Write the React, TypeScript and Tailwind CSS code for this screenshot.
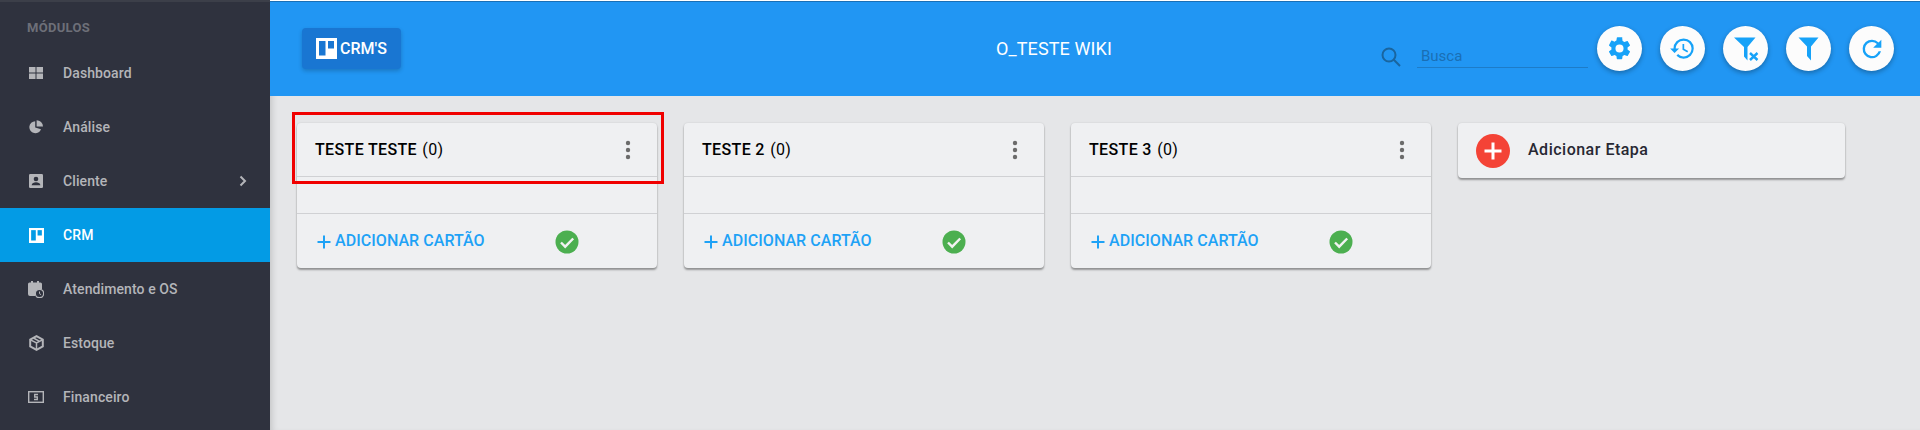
import React from "react";

function Card({ title }: { title: string }) {
  return (
    <div className="w-[360px] h-[145px] shrink-0 rounded bg-[#eff0f2] shadow-[0_2px_2px_rgba(0,0,0,0.35),0_0_2px_rgba(0,0,0,0.12)] flex flex-col">
      <div className="h-[54px] shrink-0 flex items-center justify-between pl-[18px] pr-[26px] border-b border-[#d0d1d4]">
        <span className="text-[16px] font-medium text-black tracking-[0.35px]">{title} <span className="font-normal ml-[1px]">(0)</span></span>
        <svg width="6" height="20" viewBox="0 0 6 20" className="fill-[#6b6b6b]">
          <circle cx="3" cy="3" r="2.2" />
          <circle cx="3" cy="10" r="2.2" />
          <circle cx="3" cy="17" r="2.2" />
        </svg>
      </div>
      <div className="h-[37px] shrink-0 border-b border-[#d0d1d4]" />
      <div className="flex-1 flex items-center pl-[20px] pb-[1px]">
        <svg width="14" height="14" viewBox="0 0 14 14" className="stroke-[#1ea2f6] mr-[4px] mt-[2px]" fill="none" strokeWidth="2">
          <path d="M7 0.5V13.5M0.5 7H13.5" />
        </svg>
        <span className="text-[16px] font-medium text-[#1ea2f6] leading-none tracking-[0.05px]">ADICIONAR CARTÃO</span>
        <svg width="24" height="24" viewBox="0 0 24 24" className="ml-[70px] mt-[2px]">
          <circle cx="12" cy="12" r="11.5" fill="#4caf50" />
          <path d="M6 12.5l4.2 4.2L18.2 8.5" fill="none" stroke="#f2f2f2" strokeWidth="2.4" />
        </svg>
      </div>
    </div>
  );
}

function TrelloIcon({ size, fill, hole }: { size: number; fill: string; hole: string }) {
  return (
    <svg width={size} height={size} viewBox="0 0 21 21">
      <rect width="21" height="21" fill={fill} />
      <rect x="3" y="3" width="6.5" height="14.5" fill={hole} />
      <rect x="12" y="3" width="6" height="7.5" fill={hole} />
    </svg>
  );
}

const grey = "#b4b5b9";

const icons: Record<string, React.ReactNode> = {
  dash: (
    <svg width="14" height="12" viewBox="0 0 14 12" fill={grey}>
      <rect width="6.5" height="5.5" />
      <rect x="7.5" width="6.5" height="5.5" />
      <rect y="6.5" width="6.5" height="5.5" />
      <rect x="7.5" y="6.5" width="6.5" height="5.5" />
    </svg>
  ),
  pie: (
    <svg width="14" height="14" viewBox="0 0 14 14" fill={grey}>
      <path d="M6.2 1.2A6 6 0 1 0 12 9.2L6.2 7.6Z" />
      <path d="M7.6 0.2A6.4 6.4 0 0 1 14 6.4H7.6Z" />
    </svg>
  ),
  user: (
    <svg width="14" height="14" viewBox="0 0 14 14">
      <rect width="14" height="14" rx="1.2" fill={grey} />
      <circle cx="7" cy="5" r="2.3" fill="#2f323e" />
      <path d="M2.6 11.3c.3-2.2 2.4-3 4.4-3s4.1.8 4.4 3Z" fill="#2f323e" />
    </svg>
  ),
  cal: (
    <svg width="16" height="17" viewBox="0 0 16 17">
      <rect x="3" y="0" width="2" height="3" fill={grey} />
      <rect x="9" y="0" width="2" height="3" fill={grey} />
      <path d="M1.5 1.5H12.5A1.5 1.5 0 0 1 14 3V8H2.5V13.5H7V15H2A2 2 0 0 1 0 13V3A1.5 1.5 0 0 1 1.5 1.5Z" fill={grey} />
      <rect x="2" y="8" width="9" height="6" fill={grey} />
      <circle cx="11.5" cy="12.5" r="4.2" fill="#2f323e" stroke={grey} strokeWidth="1.3" />
      <path d="M11.5 10.5v2.2l1.6 1" fill="none" stroke={grey} strokeWidth="1" />
    </svg>
  ),
  box: (
    <svg width="15" height="16" viewBox="0 0 15 16" fill="none" stroke={grey} strokeWidth="2">
      <path d="M7.5 1.2L13.8 4.5V11.5L7.5 14.8L1.2 11.5V4.5Z" />
      <path d="M1.5 4.8L7.5 8L13.5 4.8M7.5 8V14.5M4.5 3L10.5 6.3" strokeWidth="1.5" />
    </svg>
  ),
  money: (
    <svg width="16" height="12" viewBox="0 0 16 12">
      <rect x="0.7" y="0.7" width="14.6" height="10.6" fill="none" stroke={grey} strokeWidth="1.4" />
      <path d="M10 3.5H6.7V6H9.3V8.5H6" fill="none" stroke={grey} strokeWidth="1.3" />
    </svg>
  ),
};

function NavItem({ icon, label, active, chevron }: { icon: React.ReactNode; label: string; active?: boolean; chevron?: boolean }) {
  return (
    <div className={`h-[54px] flex items-center pl-[28px] pr-[23px] ${active ? "bg-[#039be5] text-white" : "text-[#b4b5b9]"}`}>
      <span className="w-[16px] flex justify-center mr-[19px]">{icon}</span>
      <span className="text-[14px] font-medium flex-1 tracking-[0.1px]">{label}</span>
      {chevron && (
        <svg width="8" height="12" viewBox="0 0 8 12" fill="none" stroke={grey} strokeWidth="2">
          <path d="M1.5 1.5L6 6L1.5 10.5" />
        </svg>
      )}
    </div>
  );
}

function RoundBtn({ children }: { children: React.ReactNode }) {
  return (
    <div className="w-[45px] h-[45px] rounded-full bg-[#fcfcfc] flex items-center justify-center shadow-[0_2px_5px_rgba(0,0,0,0.3)]">
      {children}
    </div>
  );
}

const blue = "#16a2f8";

export default function App() {
  return (
    <div className="w-[1920px] h-[430px] overflow-hidden flex bg-[#e5e6e8] font-['Roboto',sans-serif]">
      <aside className="w-[270px] shrink-0 bg-[#2f323e] border-t-2 border-[#3c3f49] flex flex-col">
        <div className="h-[44px] flex items-center pl-[27px] pt-[8px] text-[13px] font-bold text-[#6d6f78] tracking-[0.3px]">MÓDULOS</div>
        <div>
          <NavItem icon={icons.dash} label="Dashboard" />
          <NavItem icon={icons.pie} label="Análise" />
          <NavItem icon={icons.user} label="Cliente" chevron />
          <NavItem icon={<TrelloIcon size={15} fill="#fff" hole="#039be5" />} label="CRM" active />
          <NavItem icon={icons.cal} label="Atendimento e OS" />
          <NavItem icon={icons.box} label="Estoque" />
          <NavItem icon={icons.money} label="Financeiro" />
        </div>
      </aside>
      <main className="flex-1 flex flex-col shadow-[inset_6px_0_6px_-4px_rgba(0,0,0,0.15)]">
        <div className="h-[1px] bg-white" />
        <div className="h-[1px] bg-[#1a6fb5]" />
        <header className="h-[94px] shrink-0 bg-[#2196f3] flex items-center pl-[32px] pr-[26px]">
          <div className="h-[41px] w-[99px] -mt-[1px] rounded bg-[#1976d2] shadow-[0_2px_4px_rgba(0,0,0,0.2)] flex items-center justify-center gap-[3px] text-white text-[16px] font-medium">
            <TrelloIcon size={21} fill="#fff" hole="#1976d2" />
            <span>CRM'S</span>
          </div>
          <div className="flex-1 text-center text-white text-[18px] pl-[326px] pb-[2px] tracking-[0.1px]">O_TESTE WIKI</div>
          <div className="flex items-center">
            <svg width="20" height="20" viewBox="0 0 20 20" fill="none" stroke="#19659f" strokeWidth="2" className="mt-[16px] mr-[16px]">
              <circle cx="8" cy="8" r="6.5" />
              <path d="M12.8 12.8L19 19" />
            </svg>
            <div className="w-[171px] h-[22px] mt-[16px] mr-[9px] pl-[4px] border-b border-[#1d7cc8] text-[15px] text-[#1a6fb5] leading-[20px]">Busca</div>
            <div className="flex gap-[18px] -mt-[1px]">
              <RoundBtn>
                <svg width="27" height="27" viewBox="0 0 24 24" fill={blue}>
                  <path d="M19.14 12.94c.04-.3.06-.61.06-.94s-.02-.64-.07-.94l2.03-1.58a.49.49 0 0 0 .12-.61l-1.92-3.32a.488.488 0 0 0-.59-.22l-2.39.96a7 7 0 0 0-1.62-.94l-.36-2.54A.484.484 0 0 0 13.92 2h-3.84a.474.474 0 0 0-.47.41l-.36 2.54c-.59.24-1.13.57-1.62.94l-2.39-.96a.488.488 0 0 0-.59.22L2.74 8.87a.47.47 0 0 0 .12.61l2.03 1.58c-.05.3-.09.63-.09.94s.02.64.07.94l-2.03 1.58a.49.49 0 0 0-.12.61l1.92 3.32c.12.22.37.29.59.22l2.39-.96c.5.38 1.03.7 1.62.94l.36 2.54c.05.24.24.41.48.41h3.84c.24 0 .44-.17.47-.41l.36-2.54c.59-.24 1.13-.56 1.62-.94l2.39.96c.22.08.47 0 .59-.22l1.92-3.32a.47.47 0 0 0-.12-.61l-2-1.58ZM12 15.6A3.6 3.6 0 1 1 12 8.4a3.6 3.6 0 0 1 0 7.2Z" />
                </svg>
              </RoundBtn>
              <RoundBtn>
                <svg width="27" height="27" viewBox="0 0 24 24" fill={blue} className="-ml-[1px]">
                  <path d="M13 3a9 9 0 0 0-9 9H1l3.89 3.89.07.14L9 12H6c0-3.87 3.13-7 7-7s7 3.13 7 7-3.13 7-7 7c-1.93 0-3.68-.79-4.94-2.06l-1.42 1.42A8.95 8.95 0 0 0 13 21a9 9 0 0 0 0-18Zm-1 5v5l4.28 2.54.72-1.21-3.5-2.08V8H12Z" />
                </svg>
              </RoundBtn>
              <RoundBtn>
                <svg width="26" height="24" viewBox="0 0 26 24" fill={blue} className="ml-[3px] mt-[1px]">
                  <path d="M0 0.5H21.500L13.500 10V23.500L10 19.500V10Z" />
                  <path d="M16 16L23.500 23M23.500 16L16 23" stroke={blue} strokeWidth="2.400" fill="none" />
                </svg>
              </RoundBtn>
              <RoundBtn>
                <svg width="21" height="24" viewBox="0 0 21 24" fill={blue} className="mt-[1px]">
                  <path d="M0.500 0.500H20.500L13 9.500V23.500L9 19V9.500Z" />
                </svg>
              </RoundBtn>
              <RoundBtn>
                <svg width="28" height="28" viewBox="0 0 24 24" fill={blue}>
                  <path d="M17.65 6.35A7.958 7.958 0 0 0 12 4a8 8 0 1 0 7.73 10h-2.08A6 6 0 1 1 12 6c1.66 0 3.14.69 4.22 1.78L13 11h7V4l-2.35 2.35Z" />
                </svg>
              </RoundBtn>
            </div>
          </div>
        </header>
        <div className="pl-[27px] pt-[27px] flex gap-[27px] items-start">
          <div className="relative">
            <Card title="TESTE TESTE" />
            <div className="absolute left-[-5px] top-[-11px] w-[372px] h-[72px] border-[3px] border-[#f00000] pointer-events-none" />
          </div>
          <Card title="TESTE 2" />
          <Card title="TESTE 3" />
          <div className="w-[387px] h-[55px] shrink-0 rounded bg-[#eff0f2] shadow-[0_2px_2px_rgba(0,0,0,0.35),0_0_2px_rgba(0,0,0,0.12)] flex items-center pl-[18px]">
            <svg width="34" height="34" viewBox="0 0 34 34" className="mr-[18px]">
              <circle cx="17" cy="17" r="17" fill="#f44336" />
              <path d="M17 8.5V25.5M8.5 17H25.5" stroke="#fff" strokeWidth="3" />
            </svg>
            <span className="text-[16px] font-medium text-[#272833] tracking-[0.5px] -mt-[2px]">Adicionar Etapa</span>
          </div>
        </div>
      </main>
    </div>
  );
}
